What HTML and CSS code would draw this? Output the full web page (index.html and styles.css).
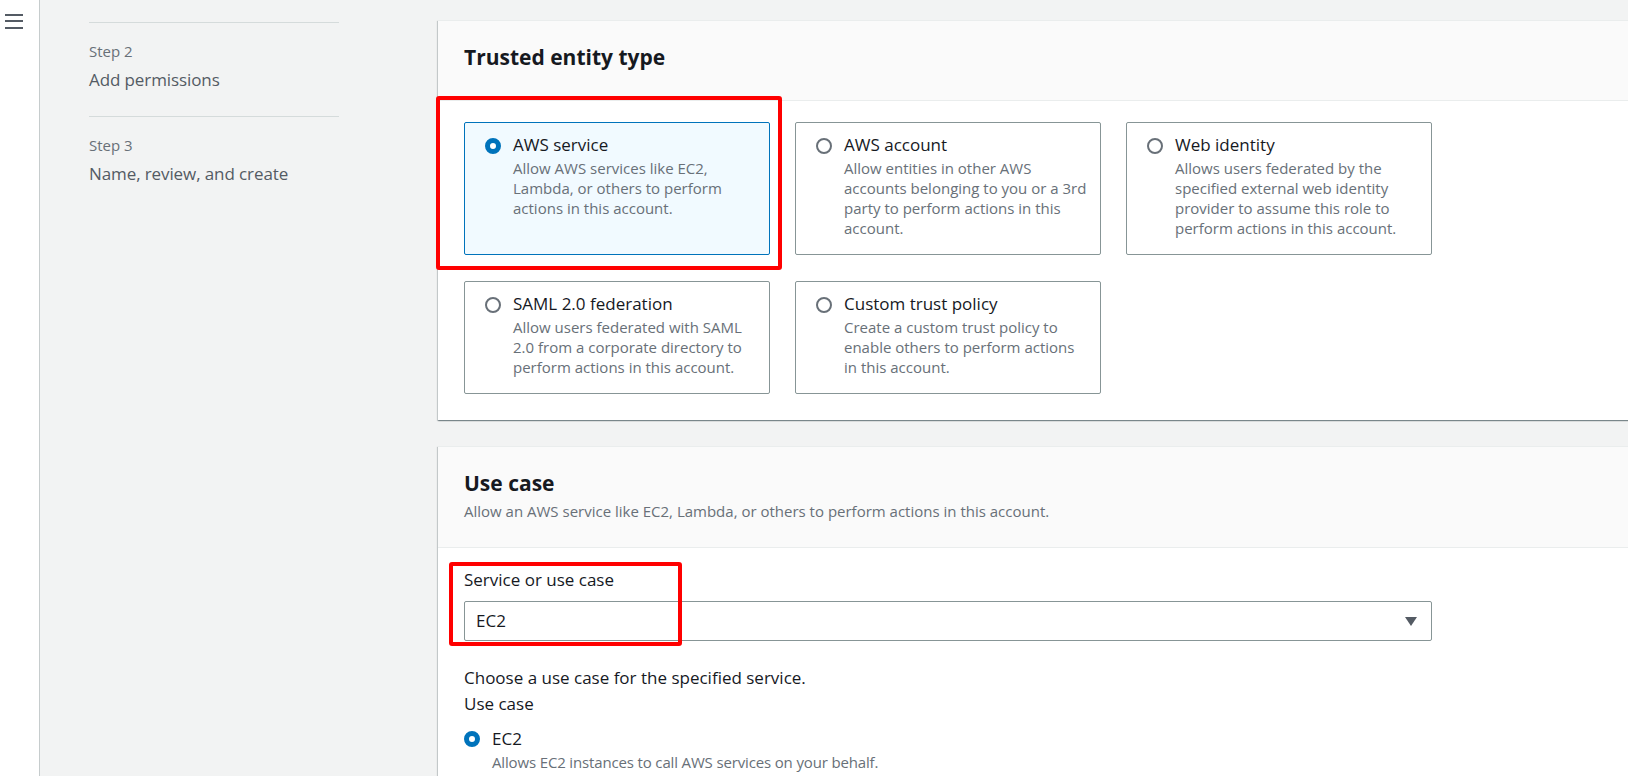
FILE: index.html
```html
<!DOCTYPE html>
<html lang="en">
<head>
<meta charset="utf-8">
<title>Create role</title>
<link rel="stylesheet" href="styles.css">
</head>
<body>
<div class="page">
  <nav class="rail">
    <svg class="burger" width="18" height="16" viewBox="0 0 18 16" aria-hidden="true">
      <rect x="0" y="1" width="18" height="2" fill="#545b64"/>
      <rect x="0" y="7" width="18" height="2" fill="#545b64"/>
      <rect x="0" y="14" width="18" height="2" fill="#545b64"/>
    </svg>
  </nav>

  <aside class="steps">
    <div class="step">
      <div class="step-num">Step 2</div>
      <div class="step-name">Add permissions</div>
    </div>
    <div class="step">
      <div class="step-num">Step 3</div>
      <div class="step-name">Name, review, and create</div>
    </div>
  </aside>

  <main class="main">
    <section class="panel">
      <header class="panel-head">
        <h2 class="panel-title">Trusted entity type</h2>
      </header>
      <div class="panel-body">
        <div class="tiles">
          <div class="tile selected">
            <span class="radio on"></span>
            <div class="tile-text">
              <div class="tile-title">AWS service</div>
              <div class="tile-desc">Allow AWS services like EC2, Lambda, or others to perform actions in this account.</div>
            </div>
          </div>
          <div class="tile">
            <span class="radio"></span>
            <div class="tile-text">
              <div class="tile-title">AWS account</div>
              <div class="tile-desc">Allow entities in other AWS accounts belonging to you or a 3rd party to perform actions in this account.</div>
            </div>
          </div>
          <div class="tile">
            <span class="radio"></span>
            <div class="tile-text">
              <div class="tile-title">Web identity</div>
              <div class="tile-desc">Allows users federated by the specified external web identity provider to assume this role to perform actions in this account.</div>
            </div>
          </div>
          <div class="tile">
            <span class="radio"></span>
            <div class="tile-text">
              <div class="tile-title">SAML 2.0 federation</div>
              <div class="tile-desc">Allow users federated with SAML 2.0 from a corporate directory to perform actions in this account.</div>
            </div>
          </div>
          <div class="tile">
            <span class="radio"></span>
            <div class="tile-text">
              <div class="tile-title">Custom trust policy</div>
              <div class="tile-desc">Create a custom trust policy to enable others to perform actions in this account.</div>
            </div>
          </div>
        </div>
      </div>
    </section>

    <section class="panel">
      <header class="panel-head with-desc">
        <h2 class="panel-title">Use case</h2>
        <div class="panel-desc">Allow an AWS service like EC2, Lambda, or others to perform actions in this account.</div>
      </header>
      <div class="panel-body usecase">
        <div class="field-label">Service or use case</div>
        <div class="select">
          <span class="select-value">EC2</span>
          <svg class="caret" width="12" height="9" viewBox="0 0 12 9" aria-hidden="true">
            <polygon points="0,0 12,0 6,9" fill="#545b64"/>
          </svg>
        </div>
        <div class="hint">Choose a use case for the specified service.</div>
        <div class="field-label tight">Use case</div>
        <div class="option">
          <span class="radio on"></span>
          <div class="option-text">
            <div class="option-title">EC2</div>
            <div class="option-desc">Allows EC2 instances to call AWS services on your behalf.</div>
          </div>
        </div>
      </div>
    </section>
  </main>

  <div class="annot annot-entity"></div>
  <div class="annot annot-service"></div>
</div>
</body>
</html>
```

FILE: styles.css
```css
* { box-sizing: border-box; }

html, body {
  margin: 0;
  padding: 0;
  height: 100%;
  overflow: hidden;
}

body {
  background: #f2f3f3;
  font-family: "Open Sans", "Noto Sans", sans-serif;
  color: #16191f;
}

.page {
  position: relative;
  display: flex;
  align-items: flex-start;
  min-height: 776px;
}

.rail {
  flex: 0 0 40px;
  align-self: stretch;
  min-height: 776px;
  background: #ffffff;
  border-right: 1px solid #c6cccd;
  padding: 13px 0 0 5px;
}

.burger { display: block; }

.steps {
  flex: 0 0 250px;
  margin-left: 49px;
  padding-top: 22px;
}

.step {
  border-top: 1px solid #d5dbdb;
  padding: 18px 0 25px;
}

.step-num {
  font-size: 15px;
  line-height: 20px;
  color: #687078;
}

.step-name {
  margin-top: 8px;
  font-size: 17px;
  line-height: 22px;
  color: #545b64;
  letter-spacing: -0.1px;
}

.main {
  flex: 1 1 auto;
  margin-left: 99px;
  margin-right: -40px;
  padding-top: 20px;
}

.panel {
  background: #ffffff;
  border-top: 1px solid #eaeded;
  box-shadow: 0 1px 1px 0 rgba(0, 28, 36, 0.3),
              1px 1px 1px 0 rgba(0, 28, 36, 0.15),
              -1px 1px 1px 0 rgba(0, 28, 36, 0.15);
  margin-bottom: 26px;
}

.panel-head {
  background: #fafafa;
  border-bottom: 1px solid #eaeded;
  padding: 22px 26px 29px;
}

.panel-head.with-desc { padding-bottom: 26px; }

.panel-title {
  margin: 0;
  font-size: 21px;
  line-height: 28px;
  font-weight: 700;
  color: #16191f;
}

.panel-desc {
  margin-top: 4px;
  font-size: 15px;
  line-height: 20px;
  color: #687078;
}

.panel-body {
  padding: 21px 26px 26px;
}

.tiles {
  display: grid;
  grid-template-columns: repeat(3, 306px);
  column-gap: 25px;
  row-gap: 26px;
}

.tile {
  display: flex;
  align-items: flex-start;
  gap: 12px;
  border: 1px solid #879596;
  border-radius: 2px;
  background: #ffffff;
  padding: 11px 12px 16px 20px;
}

.tile.selected {
  background: #f1faff;
  border-color: #0073bb;
}

.radio {
  flex: 0 0 16px;
  width: 16px;
  height: 16px;
  margin-top: 4px;
  border-radius: 50%;
  border: 2px solid #687078;
  background: #ffffff;
}

.radio.on {
  border: 5px solid #0073bb;
}

.tile-title {
  font-size: 17px;
  line-height: 22px;
  color: #16191f;
}

.tile-desc {
  margin-top: 2px;
  font-size: 15px;
  line-height: 20px;
  color: #687078;
}

.field-label {
  font-size: 17px;
  line-height: 22px;
  color: #16191f;
}

.field-label.tight { margin-top: 4px; }

.select {
  margin-top: 10px;
  width: 968px;
  height: 40px;
  border: 1px solid #879596;
  border-radius: 2px;
  background: #ffffff;
  display: flex;
  align-items: center;
  justify-content: space-between;
  padding: 0 14px 0 11px;
}

.select-value {
  font-size: 17px;
  line-height: 22px;
  color: #16191f;
}

.caret { display: block; }

.hint {
  margin-top: 26px;
  font-size: 17px;
  line-height: 22px;
  color: #16191f;
}

.option {
  margin-top: 13px;
  display: flex;
  align-items: flex-start;
  gap: 12px;
}

.option .radio { margin-top: 3px; }

.option-title {
  font-size: 17px;
  line-height: 22px;
  color: #16191f;
}

.option-desc {
  margin-top: 2px;
  font-size: 15px;
  line-height: 20px;
  color: #687078;
  letter-spacing: -0.15px;
}

.annot {
  position: absolute;
  border: 4px solid #ff0000;
  border-radius: 3px;
  pointer-events: none;
}

.annot-entity {
  left: 436px;
  top: 96px;
  width: 346px;
  height: 174px;
}

.annot-service {
  left: 449px;
  top: 562px;
  width: 233px;
  height: 84px;
}
```
